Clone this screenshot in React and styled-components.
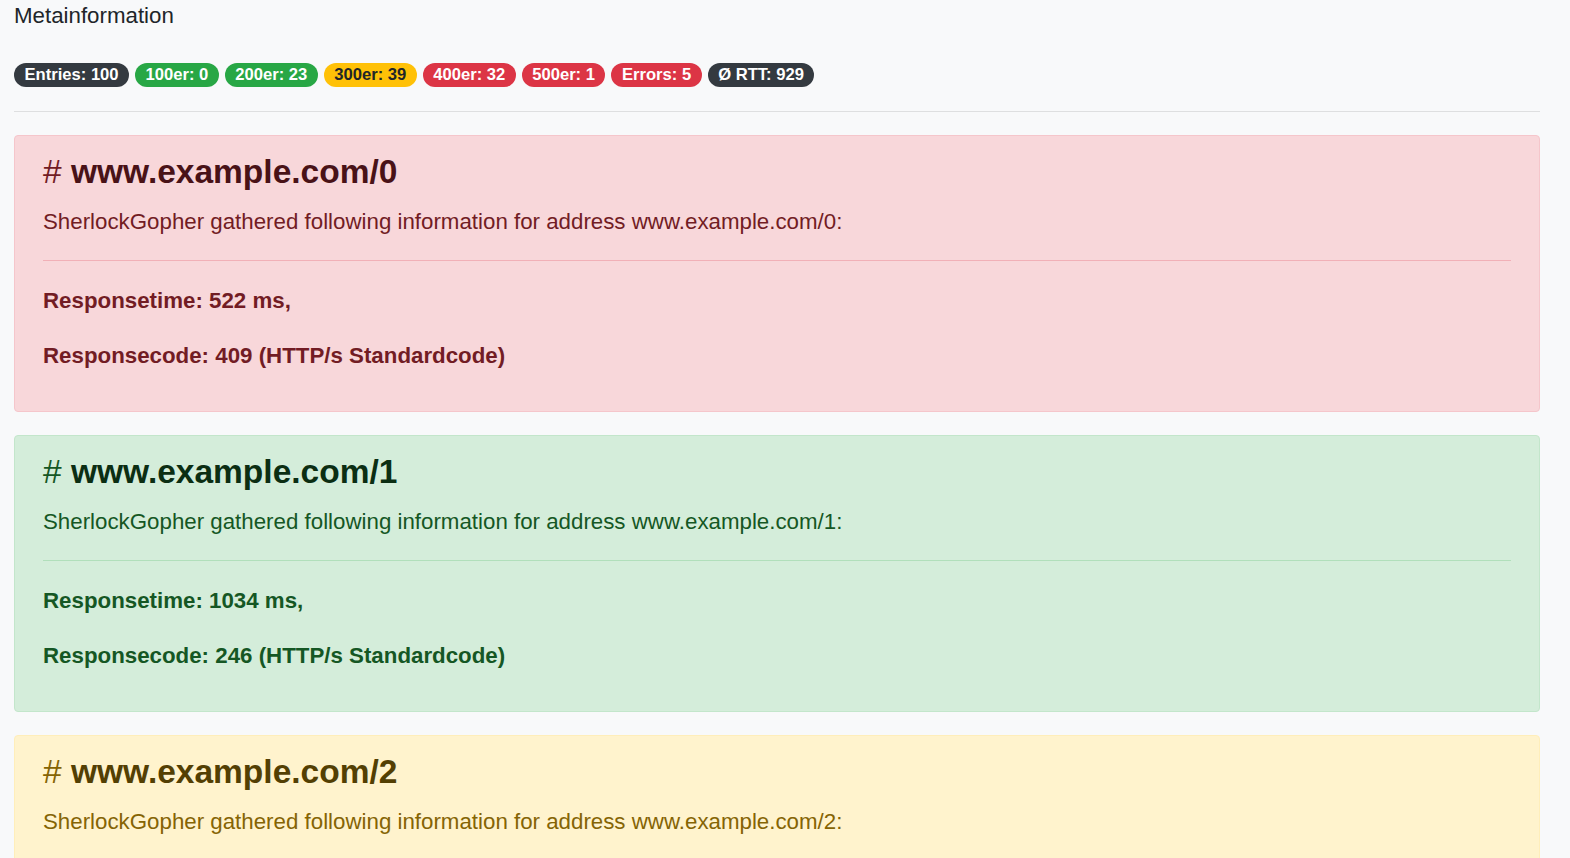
import styled, { createGlobalStyle } from 'styled-components';

const GlobalStyle = createGlobalStyle`
  html, body {
    margin: 0;
    padding: 0;
    background: #f8f9fa;
    font-family: "Liberation Sans", Arial, Helvetica, sans-serif;
    color: #212529;
  }
`;

const variants = {
  dark: { bg: '#343a40', fg: '#fff' },
  success: { bg: '#28a745', fg: '#fff' },
  warning: { bg: '#ffc107', fg: '#212529' },
  danger: { bg: '#dc3545', fg: '#fff' },
};

const alerts = {
  danger: { bg: '#f8d7da', border: '#f5c6cb', fg: '#721c24', dark: '#491217', hr: '#f1b0b7' },
  success: { bg: '#d4edda', border: '#c3e6cb', fg: '#155724', dark: '#0b2e13', hr: '#b1dfbb' },
  warning: { bg: '#fff3cd', border: '#ffeeba', fg: '#856404', dark: '#533f03', hr: '#ffe8a1' },
};

const badges = [
  ['dark', 'Entries: 100'],
  ['success', '100er: 0'],
  ['success', '200er: 23'],
  ['warning', '300er: 39'],
  ['danger', '400er: 32'],
  ['danger', '500er: 1'],
  ['danger', 'Errors: 5'],
  ['dark', 'Ø RTT: 929'],
];

const entries = [
  { url: 'www.example.com/0', time: 522, code: 409, type: 'danger' },
  { url: 'www.example.com/1', time: 1034, code: 246, type: 'success' },
  { url: 'www.example.com/2', time: 731, code: 302, type: 'warning' },
];

export default function App() {
  return (
    <>
      <GlobalStyle />
      <Page>
        <Title>Metainformation</Title>
        <BadgeRow>
          {badges.map(([v, text]) => (
            <Badge key={text} $variant={v}>
              {text}
            </Badge>
          ))}
        </BadgeRow>
        <Divider />
        <AlertList>
          {entries.map((e) => (
            <Alert key={e.url} $type={e.type}>
              <Heading $type={e.type}>
                # <strong>{e.url}</strong>
              </Heading>
              <Lead>SherlockGopher gathered following information for address {e.url}:</Lead>
              <AlertRule $type={e.type} />
              <Info>Responsetime: {e.time} ms,</Info>
              <Info>Responsecode: {e.code} (HTTP/s Standardcode)</Info>
            </Alert>
          ))}
        </AlertList>
      </Page>
    </>
  );
}

// -------------------------------------------------- styling ----------------------------------------------
const Page = styled.div`
  padding: 4px 30px 40px 14px;
`;

const Title = styled.h5`
  margin: 0;
  font-size: 22.3px;
  line-height: 24px;
  font-weight: 400;
  color: #212529;
`;

const BadgeRow = styled.div`
  display: flex;
  flex-wrap: wrap;
  gap: 6px;
  margin-top: 35px;
`;

const Badge = styled.span`
  display: inline-block;
  height: 24px;
  line-height: 24px;
  padding: 0 10.5px;
  border-radius: 12px;
  font-size: 16.6px;
  font-weight: 700;
  white-space: nowrap;
  background: ${({ $variant }) => variants[$variant].bg};
  color: ${({ $variant }) => variants[$variant].fg};
`;

const Divider = styled.hr`
  margin: 24px 0 23px;
  border: 0;
  border-top: 1px solid rgba(0, 0, 0, 0.1);
`;

const AlertList = styled.div`
  display: flex;
  flex-direction: column;
  gap: 23px;
`;

const Alert = styled.div`
  padding: 15px 28px 42px;
  border: 1px solid ${({ $type }) => alerts[$type].border};
  border-radius: 4px;
  background: ${({ $type }) => alerts[$type].bg};
  color: ${({ $type }) => alerts[$type].fg};
`;

const Heading = styled.h2`
  margin: 0;
  font-size: 33.5px;
  line-height: 42px;
  font-weight: 400;

  strong {
    font-weight: 700;
    color: ${({ $type }) => alerts[$type].dark};
  }
`;

const Lead = styled.p`
  margin: 12px 0 0;
  font-size: 22.3px;
  line-height: 33px;
`;

const AlertRule = styled.hr`
  margin: 22px 0 0;
  border: 0;
  border-top: 1px solid ${({ $type }) => alerts[$type].hr};
`;

const Info = styled.p`
  margin: 27px 0 0;
  font-size: 22.3px;
  line-height: 26px;
  font-weight: 700;

  & + & {
    margin-top: 29px;
  }
`;
